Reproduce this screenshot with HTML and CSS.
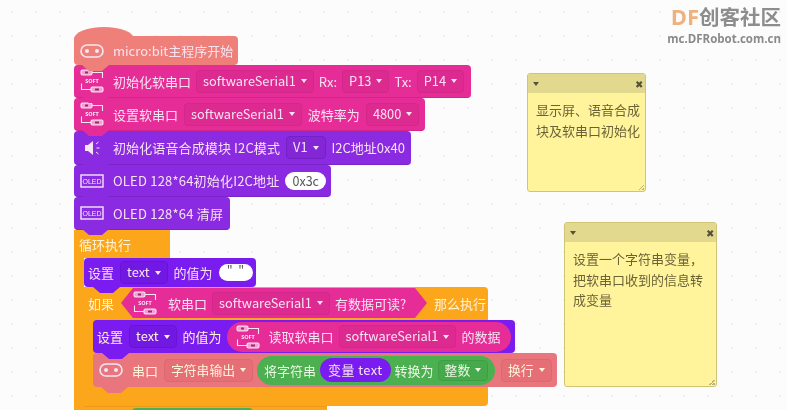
FILE: index.html
```html
<!DOCTYPE html>
<html lang="zh">
<head>
<meta charset="utf-8">
<title>micro:bit 程序</title>
<link rel="stylesheet" href="styles.css">
</head>
<body>
<svg class="defs" width="0" height="0" aria-hidden="true">
  <symbol id="mb" viewBox="0 0 24 14">
    <rect x="1" y="1" width="22" height="12" rx="6" fill="none" stroke="currentColor" stroke-width="1.6"/>
    <circle cx="7" cy="7" r="2" fill="currentColor"/>
    <circle cx="17" cy="7" r="2" fill="currentColor"/>
  </symbol>
  <symbol id="soft" viewBox="0 0 24 24">
    <g fill="none" stroke="currentColor" stroke-width="1.100">
      <path d="M12 3.500h10.500v5.500M1.500 14.500v6H11"/>
      <rect x="1" y="1" width="11" height="5" rx="1.500" fill="#fff" fill-opacity=".55"/>
      <rect x="11" y="18" width="12" height="5" rx="1.500" fill="#fff" fill-opacity=".55"/>
    </g>
    <path d="M5 2.500h3v2H5zM15 19.500h4v2h-4z" fill="#9a2a70"/>
    <text x="12" y="13.500" class="soft-t">SOFT</text>
  </symbol>
  <symbol id="oled" viewBox="0 0 24 14">
    <rect x="1" y="1" width="22" height="12" fill="none" stroke="currentColor" stroke-width="1.400"/>
    <text x="12" y="9.800" class="oled-t">OLED</text>
  </symbol>
</svg>

<main class="canvas">
  <div class="logo">
    <div class="logo-top"><span class="logo-df">DF</span>创客社区</div>
    <div class="logo-url">mc.DFRobot.com.cn</div>
  </div>

  <section class="stack">
    <div class="block coral hat h29 w164 z9">
      <svg class="ic ic-mb"><use href="#mb"/></svg><span>micro:bit主程序开始</span>
    </div>
    <div class="block pink h33 w397 tight z8">
      <svg class="ic ic-soft"><use href="#soft"/></svg><span>初始化软串口</span>
      <span class="field f-pink">softwareSerial1<i></i></span><span>Rx:</span>
      <span class="field f-pink">P13<i></i></span><span>Tx:</span>
      <span class="field f-pink">P14<i></i></span>
    </div>
    <div class="block pink h33 w351 z7">
      <svg class="ic ic-soft"><use href="#soft"/></svg><span>设置软串口</span>
      <span class="field f-pink">softwareSerial1<i></i></span><span>波特率为</span>
      <span class="field f-pink">4800<i></i></span>
    </div>
    <div class="block purple h34 w337 z6">
      <svg class="ic ic-sp" viewBox="0 0 24 20"><path d="M5 7h3l5-4v14l-5-4H5z" fill="currentColor"/><path d="M16 6l2.500-2M16.500 10h3M16 14l2.500 2" stroke="currentColor" fill="none"/></svg><span class="wide-s">初始化语音合成模块 I2C模式</span>
      <span class="field f-purple">V1<i></i></span><span>I2C地址0x40</span>
    </div>
    <div class="block purple h32 w257 z5">
      <svg class="ic ic-oled"><use href="#oled"/></svg><span class="wide">OLED 128*64初始化I2C地址</span>
      <span class="pill">0x3c</span>
    </div>
    <div class="block purple h33 w156 z4">
      <svg class="ic ic-oled"><use href="#oled"/></svg><span class="wide">OLED 128*64 清屏</span>
    </div>

    <div class="loop">
      <div class="loop-head">循环执行</div>
      <div class="loop-body">
        <div class="block violet h29 w172 set z3">
          <span>设置</span><span class="field f-violet">text<i></i></span><span>的值为</span>
          <span class="pill pill-q">"&nbsp;&nbsp;"</span>
        </div>
        <div class="cond">
          <div class="cond-head">
            <span>如果</span>
            <div class="hex">
              <svg class="ic ic-soft"><use href="#soft"/></svg>
              <span class="sep">软串口</span>
              <span class="field f-pink">softwareSerial1<i></i></span>
              <span>有数据可读?</span>
            </div>
            <span>那么执行</span>
          </div>
          <div class="cond-body">
            <div class="block violet h33 w422 set z2">
              <span>设置</span><span class="field f-violet">text<i></i></span><span>的值为</span>
              <div class="reporter">
                <svg class="ic ic-soft"><use href="#soft"/></svg>
                <span>读取软串口</span>
                <span class="field f-pink">softwareSerial1<i></i></span>
                <span>的数据</span>
              </div>
            </div>
            <div class="block salmon h34 w464 z1">
              <svg class="ic ic-mb"><use href="#mb"/></svg><span>串口</span>
              <span class="field f-salmon">字符串输出<i></i></span>
              <div class="green-pill">
                <span>将字符串</span>
                <span class="var">变量 text</span>
                <span>转换为</span>
                <span class="field f-green">整数<i></i></span>
              </div>
              <span class="field f-salmon">换行<i></i></span>
            </div>
          </div>
        </div>
        <div class="cond-next"><div class="cond-next-hex"></div></div>
      </div>
    </div>
  </section>

  <aside class="note note-a">
    <div class="note-head"><i class="note-caret"></i><span class="note-x">✖</span></div>
    <p class="note-text">显示屏、语音合成块及软串口初始化</p>
    <i class="note-grip"></i>
  </aside>
  <aside class="note note-b">
    <div class="note-head"><i class="note-caret"></i><span class="note-x">✖</span></div>
    <p class="note-text">设置一个字符串变量，把软串口收到的信息转成变量</p>
    <i class="note-grip"></i>
  </aside>
</main>
</body>
</html>
```

FILE: styles.css
```css
* { box-sizing: border-box; }
html, body { margin: 0; padding: 0; }
body { width: 787px; height: 410px; overflow: hidden; background: #fbfbfb; }
.defs { display: none; }

.canvas {
  position: relative;
  width: 787px;
  height: 410px;
  overflow: hidden;
  font: 13px/1 "Noto Sans CJK SC", "Noto Sans", sans-serif;
  color: #f7e3f2;
  background-color: #fcfcfc;
  background-image: radial-gradient(circle, #f0f0f0 0.8px, transparent 1px);
  background-size: 24px 24px;
  filter: blur(0.35px);
}

.logo { position: absolute; top: 2px; right: 6px; text-align: right; color: #8d8d8d; }
.logo-top { font: 700 20.500px/28px "Noto Sans CJK SC", sans-serif; height: 28px; }
.logo-df { color: #efb27f; font-family: "Open Sans", sans-serif; font-size: 22px; }
.logo-url { margin-top: 2px; font: 700 11.500px/14px "Open Sans", sans-serif; color: #8a8a8a; }

.stack {
  position: absolute;
  left: 74px;
  top: 27px;
  padding-top: 9px;
  display: flex;
  flex-direction: column;
  align-items: flex-start;
}

.block {
  position: relative;
  display: flex;
  align-items: center;
  gap: 6px;
  padding-left: 6px;
  border-radius: 4px;
  white-space: nowrap;
  flex: none;
}
.block.tight { gap: 5px; }
.block.tight .ic { margin-right: 4px; }
.block::after {
  content: "";
  position: absolute;
  left: 8px;
  bottom: -6px;
  width: 27px;
  height: 6px;
  background: inherit;
  clip-path: polygon(0 0, 100% 0, 74% 100%, 26% 100%);
}
.hat::before {
  content: "";
  position: absolute;
  left: 0;
  top: -9px;
  width: 60px;
  height: 12px;
  background: #ef8079;
  border-radius: 50% 50% 0 0 / 100% 100% 0 0;
}

.coral { background: #ef8079; }
.pink { background: #e62c97; border-bottom: 1px solid #d0258a; }
.purple { background: #8a2be2; border-bottom: 1px solid #7a24c9; }
.violet { background: #7a1cf0; }
.salmon { background: #e9767c; }

.h29 { height: 29px; }
.h32 { height: 32px; }
.h33 { height: 33px; }
.h34 { height: 34px; }
.w164 { width: 164px; }
.w397 { width: 397px; }
.w351 { width: 351px; }
.w337 { width: 337px; }
.w257 { width: 257px; }
.w156 { width: 156px; }
.w172 { width: 172px; }
.w422 { width: 422px; }
.w464 { width: 464px; }
.z9 { z-index: 9; } .z8 { z-index: 8; } .z7 { z-index: 7; }
.z6 { z-index: 6; } .z5 { z-index: 5; } .z4 { z-index: 4; }
.z3 { z-index: 3; } .z2 { z-index: 2; } .z1 { z-index: 1; }

.wide { letter-spacing: .2px; }
.wide-s { letter-spacing: .12px; }

.ic { flex: none; color: #f6e6f4; margin-right: 3px; }
.ic-mb { width: 24px; height: 14px; }
.ic-soft { width: 24px; height: 24px; }
.ic-sp { width: 24px; height: 20px; }
.ic-oled { width: 24px; height: 14px; }
.soft-t { font: 700 5.500px "Open Sans", sans-serif; fill: currentColor; text-anchor: middle; }
.oled-t { font: 400 7px "Liberation Sans", sans-serif; fill: currentColor; text-anchor: middle; }

.field {
  display: inline-flex;
  align-items: center;
  height: 23px;
  padding: 0 6px;
  gap: 5px;
  border-radius: 4px;
  flex: none;
  font-size: 12.800px;
}
.field i {
  width: 0;
  height: 0;
  border-left: 3.500px solid transparent;
  border-right: 3.500px solid transparent;
  border-top: 4px solid currentColor;
}
.f-pink { background: #dc2a90; border: 1px solid #d3278a; }
.f-purple { background: #8226d6; border: 1px solid #7420c4; }
.f-violet { background: #7119e2; border: 1px solid #6715d2; }
.f-salmon { background: #e66f75; border: 1px solid #dd686e; }
.f-green { background: #46a94b; border: 1px solid #3f9e45; height: 21px; }

.pill {
  height: 18px;
  line-height: 18px;
  padding: 0 7px;
  border-radius: 10px;
  background: #fff;
  color: #555;
  font-size: 12.500px;
}
.pill-q { width: 34px; height: 17px; line-height: 13px; text-align: center; padding: 0; }

.loop { display: flex; flex-direction: column; align-items: flex-start; }
.loop-head {
  width: 96px;
  height: 28px;
  padding: 8px 0 0 5px;
  background: #fca61c;
  color: #fff3d8;
}
.loop-body { border-left: 10px solid #fca61c; display: flex; flex-direction: column; align-items: flex-start; }

.set { padding-left: 4px; }
.set::after { left: 9px; }

.cond { width: 404px; height: 119px; background: #fca61c; border-radius: 0 4px 4px 0; flex: none; color: #fff3d8; }
.cond-head { height: 33px; display: flex; align-items: center; gap: 7px; padding-left: 4px; white-space: nowrap; }
.cond-body { padding-left: 9px; }

.hex {
  width: 306px;
  height: 30px;
  margin-top: -1px;
  display: flex;
  align-items: center;
  gap: 5px;
  padding-left: 12px;
  background: #e62c97;
  color: #f7e3f2;
  clip-path: polygon(12px 0, calc(100% - 12px) 0, 100% 50%, calc(100% - 12px) 100%, 12px 100%, 0 50%);
  flex: none;
}
.hex .ic { margin-right: 1px; }
.hex .sep { padding-left: 5px; }

.reporter {
  display: flex;
  align-items: center;
  gap: 5px;
  width: 284px;
  height: 30px;
  padding-left: 9px;
  margin-left: -1px;
  background: #e62c97;
  color: #f7e3f2;
  border-radius: 15px;
  flex: none;
}
.reporter .ic { margin-right: 4px; }

.green-pill {
  display: flex;
  align-items: center;
  gap: 4px;
  width: 238px;
  height: 29px;
  margin-left: -2px;
  padding-left: 7px;
  background: #4cb050;
  border-radius: 15px;
  color: #ecf7e6;
  flex: none;
}
.var {
  padding: 0 8px;
  height: 24px;
  line-height: 24px;
  border-radius: 12px;
  background: #7a1cf0;
  color: #f7e3f2;
  font-size: 13px;
  letter-spacing: .4px;
}

.cond-next { width: 243px; height: 30px; background: #fca61c; border-top: 1px solid #ed9a17; padding: 1px 0 0 48px; }
.cond-next-hex { width: 121px; height: 26px; background: #4cb050; border-radius: 4px; }

.note {
  position: absolute;
  background: #fff39b;
  border: 1px solid #cfc673;
  border-radius: 3px;
  color: #6b6338;
}
.note-a { left: 527px; top: 73px; width: 119px; height: 119px; }
.note-b { left: 564px; top: 222px; width: 153px; height: 165px; }
.note-head {
  height: 19px;
  background: #e2d98f;
  display: flex;
  align-items: center;
  justify-content: space-between;
  padding: 0 2px 0 5px;
}
.note-caret {
  width: 0;
  height: 0;
  border-left: 3px solid transparent;
  border-right: 3px solid transparent;
  border-top: 4px solid #55513a;
}
.note-x { font-size: 10px; color: #55513a; }
.note-text { margin: 7px 0 0 8px; font-size: 13px; line-height: 20.500px; }
.note-b .note-text { margin-right: 10px; }
.note-grip {
  position: absolute;
  right: 1px;
  bottom: 1px;
  width: 6px;
  height: 6px;
  background: linear-gradient(135deg, transparent 50%, #b9b27a 50%, #b9b27a 62%, transparent 62%, transparent 75%, #b9b27a 75%);
}
```
